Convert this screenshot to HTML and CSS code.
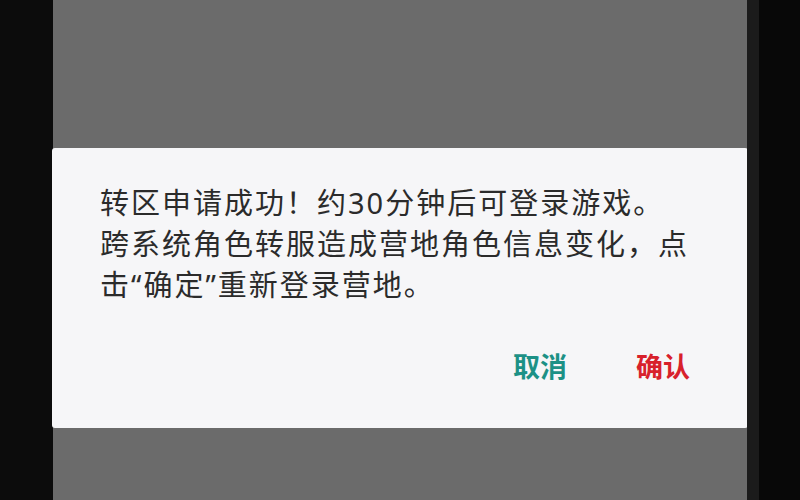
FILE: index.html
```html
<!DOCTYPE html>
<html lang="zh-CN">
<head>
<meta charset="utf-8">
<title>转区</title>
<link rel="stylesheet" href="styles.css">
</head>
<body>
<div class="screen">
  <div class="bezel-left"></div>
  <main class="stage">
    <section class="dialog">
      <p class="message">转区申请成功！约30分钟后可登录游戏。<br>跨系统角色转服造成营地角色信息变化，点击“确定”重新登录营地。</p>
      <div class="actions">
        <button class="btn btn-cancel">取消</button>
        <button class="btn btn-ok">确认</button>
      </div>
    </section>
  </main>
  <div class="edge-right"></div>
  <div class="bezel-right"></div>
</div>
</body>
</html>
```

FILE: styles.css
```css
html, body {
  margin: 0;
  padding: 0;
  background: #0a0a0a;
}

.screen {
  display: flex;
  width: 800px;
  height: 500px;
  overflow: hidden;
  font-family: "Noto Sans", "Noto Sans CJK SC", sans-serif;
}

.bezel-left {
  width: 53px;
  flex: none;
  background: #0c0c0c;
}

.stage {
  width: 694px;
  flex: none;
  background: #6b6b6b;
  display: flex;
  flex-direction: column;
  padding-top: 148px;
  box-sizing: border-box;
}

.edge-right {
  width: 12px;
  flex: none;
  background: #1b1b1b;
}

.bezel-right {
  flex: 1;
  background: #080808;
}

.dialog {
  margin: 0 -1px;
  height: 280px;
  box-sizing: border-box;
  background: #f6f6f8;
  border-radius: 3px;
  padding: 34px 56px 0 48px;
}

.message {
  margin: 0;
  font-size: 29px;
  line-height: 41px;
  letter-spacing: 2px;
  color: #2b2b2b;
}

.actions {
  display: flex;
  justify-content: flex-end;
  gap: 69px;
  margin: 47px 2px 0 0;
}

.btn {
  border: 0;
  background: none;
  padding: 0;
  font-family: inherit;
  font-size: 27px;
  line-height: 30px;
  font-weight: 700;
}

.btn-cancel {
  color: #1c9186;
}

.btn-ok {
  color: #d8212b;
}
```
